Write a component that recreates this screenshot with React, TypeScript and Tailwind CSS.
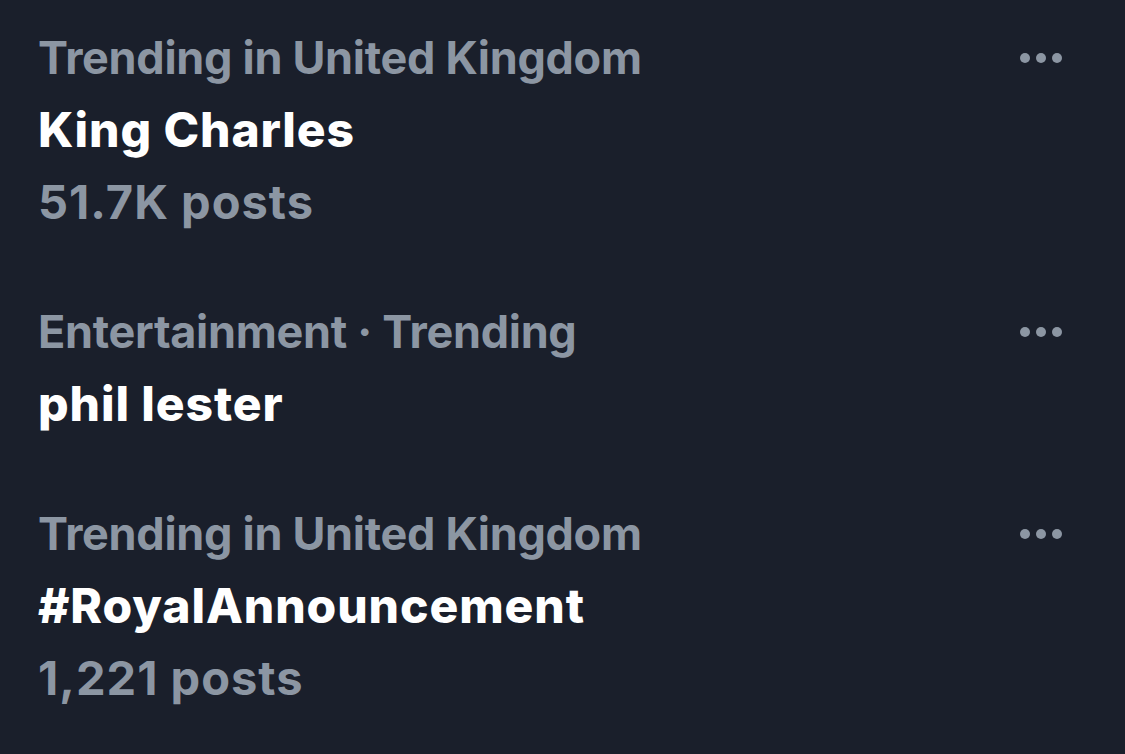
interface Trend {
  meta: string;
  title: string;
  posts?: string;
}

const trends: Trend[] = [
  { meta: "Trending in United Kingdom", title: "King Charles", posts: "51.7K posts" },
  { meta: "Entertainment · Trending", title: "phil lester" },
  { meta: "Trending in United Kingdom", title: "#RoyalAnnouncement", posts: "1,221 posts" },
];

function Dots() {
  return (
    <div className="flex items-center gap-[6px] h-[72px]">
      <span className="size-[10px] rounded-full bg-[#8c96a3]" />
      <span className="size-[10px] rounded-full bg-[#8c96a3]" />
      <span className="size-[10px] rounded-full bg-[#8c96a3]" />
    </div>
  );
}

function TrendRow({ trend }: { trend: Trend }) {
  return (
    <div className="flex justify-between">
      <div className="flex flex-col leading-[72px]">
        <span className="text-[#8c96a3] text-[45px] font-bold tracking-[-0.3px]">{trend.meta}</span>
        <span className="text-white text-[48px] font-extrabold tracking-[0.9px]">{trend.title}</span>
        {trend.posts && (
          <span className="text-[#8c96a3] text-[47px] font-bold tracking-[1px]">{trend.posts}</span>
        )}
      </div>
      <Dots />
    </div>
  );
}

export default function App() {
  return (
    <div
      className="w-[1125px] h-[754px] bg-[#1a1f2b] pl-[38px] pr-[63px] pt-[22px] flex flex-col gap-[58px] overflow-hidden"
      style={{ fontFamily: "Inter, 'Liberation Sans', sans-serif" }}
    >
      {trends.map((t, i) => (
        <TrendRow key={i} trend={t} />
      ))}
    </div>
  );
}
